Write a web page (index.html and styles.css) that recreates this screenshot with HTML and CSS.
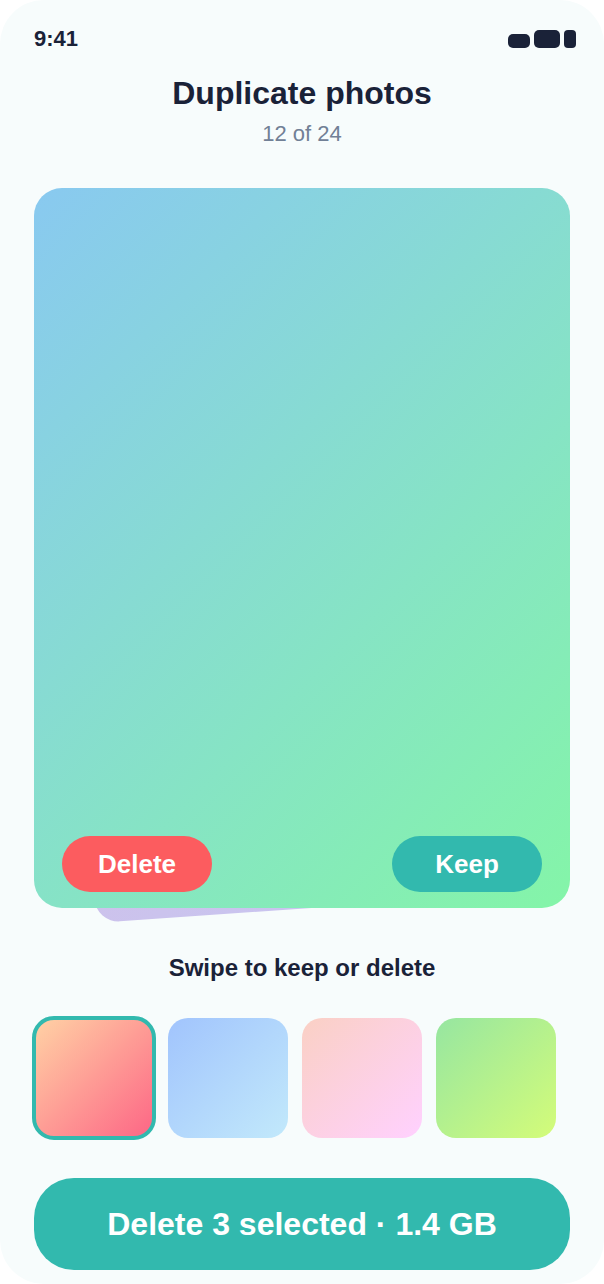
FILE: index.html
```html
<!doctype html>
<html>
<head>
<meta charset="utf-8">
<title>Duplicate photos</title>
<link rel="stylesheet" href="styles.css">
</head>

<body>
	<div class="screen">
		<div class="status">
			<span class="time">9:41</span>
			<div class="status-icons">
				<i class="signal"></i>
				<i class="wifi"></i>
				<i class="battery"></i>
			</div>
		</div>
		<h1 class="title">Duplicate photos</h1>
		<p class="count">12 of 24</p>

		<div class="stack">
			<div class="back-card"></div>
			<div class="photo-card">
				<button class="pill pill-delete">Delete</button>
				<button class="pill pill-keep">Keep</button>
			</div>
		</div>

		<p class="hint">Swipe to keep or delete</p>

		<div class="thumbs">
			<div class="thumb thumb-peach"></div>
			<div class="thumb thumb-blue"></div>
			<div class="thumb thumb-pink"></div>
			<div class="thumb thumb-green"></div>
		</div>

		<button class="delete-all">Delete 3 selected · 1.4 GB</button>
	</div>
</body>
</html>
```

FILE: styles.css
```css
*{ margin:0; padding:0; box-sizing:border-box; }
html,body{ background:#fff; }
body{ width:604px; height:1284px; overflow:hidden; font-family:"Liberation Sans",Arial,sans-serif; }
button{ border:0; font-family:inherit; color:#fff; font-weight:700; }

.screen{ width:604px; height:1284px; border-radius:44px; background:#f7fcfc; padding:0 34px; overflow:hidden; }

.status{ height:78px; display:flex; justify-content:space-between; align-items:flex-start; padding-top:26px; }
.time{ font-size:22px; line-height:25px; font-weight:700; color:#1a2238; }
.status-icons{ display:flex; align-items:flex-end; gap:4px; padding-top:4px; margin-right:-6px; }
.status-icons i{ display:block; background:#1a2238; }
.signal{ width:22px; height:14px; border-radius:5px; }
.wifi{ width:26px; height:18px; border-radius:5px; }
.battery{ width:12px; height:18px; border-radius:4px; }

.title{ font-size:32px; line-height:30px; font-weight:700; color:#1a2238; text-align:center; }
.count{ margin-top:14px; font-size:22px; line-height:24px; color:#718096; text-align:center; }

.stack{ position:relative; margin-top:42px; height:720px; }
.back-card{ position:absolute; left:62px; bottom:-15px; width:420px; height:300px; border-radius:24px; background:linear-gradient(135deg,#d0c0e8,#c6c6f2); transform-origin:0 100%; transform:rotate(-4deg); }
.photo-card{ position:relative; height:720px; border-radius:28px; background:linear-gradient(135deg,#89c9f0,#84f5a8); padding:0 28px 16px; display:flex; justify-content:space-between; align-items:flex-end; }
.pill{ width:150px; height:56px; border-radius:28px; font-size:26px; }
.pill-delete{ background:#fc5c5f; }
.pill-keep{ background:#32b9ae; }

.hint{ margin-top:46px; font-size:24px; line-height:28px; font-weight:700; color:#1a2238; text-align:center; }

.thumbs{ margin-top:36px; display:flex; gap:14px; }
.thumb{ width:120px; height:120px; border-radius:20px; }
.thumb-peach{ background:linear-gradient(135deg,#ffd3a5,#fd6585); outline:4px solid #32b9ae; outline-offset:-2px; }
.thumb-blue{ background:linear-gradient(135deg,#a1c4fd,#c2e9fb); }
.thumb-pink{ background:linear-gradient(135deg,#fad0c4,#ffd1ff); }
.thumb-green{ background:linear-gradient(135deg,#96e6a1,#d4fc79); }

.delete-all{ display:block; margin-top:40px; width:536px; height:92px; border-radius:40px; background:#32b9ae; font-size:32px; }
```
